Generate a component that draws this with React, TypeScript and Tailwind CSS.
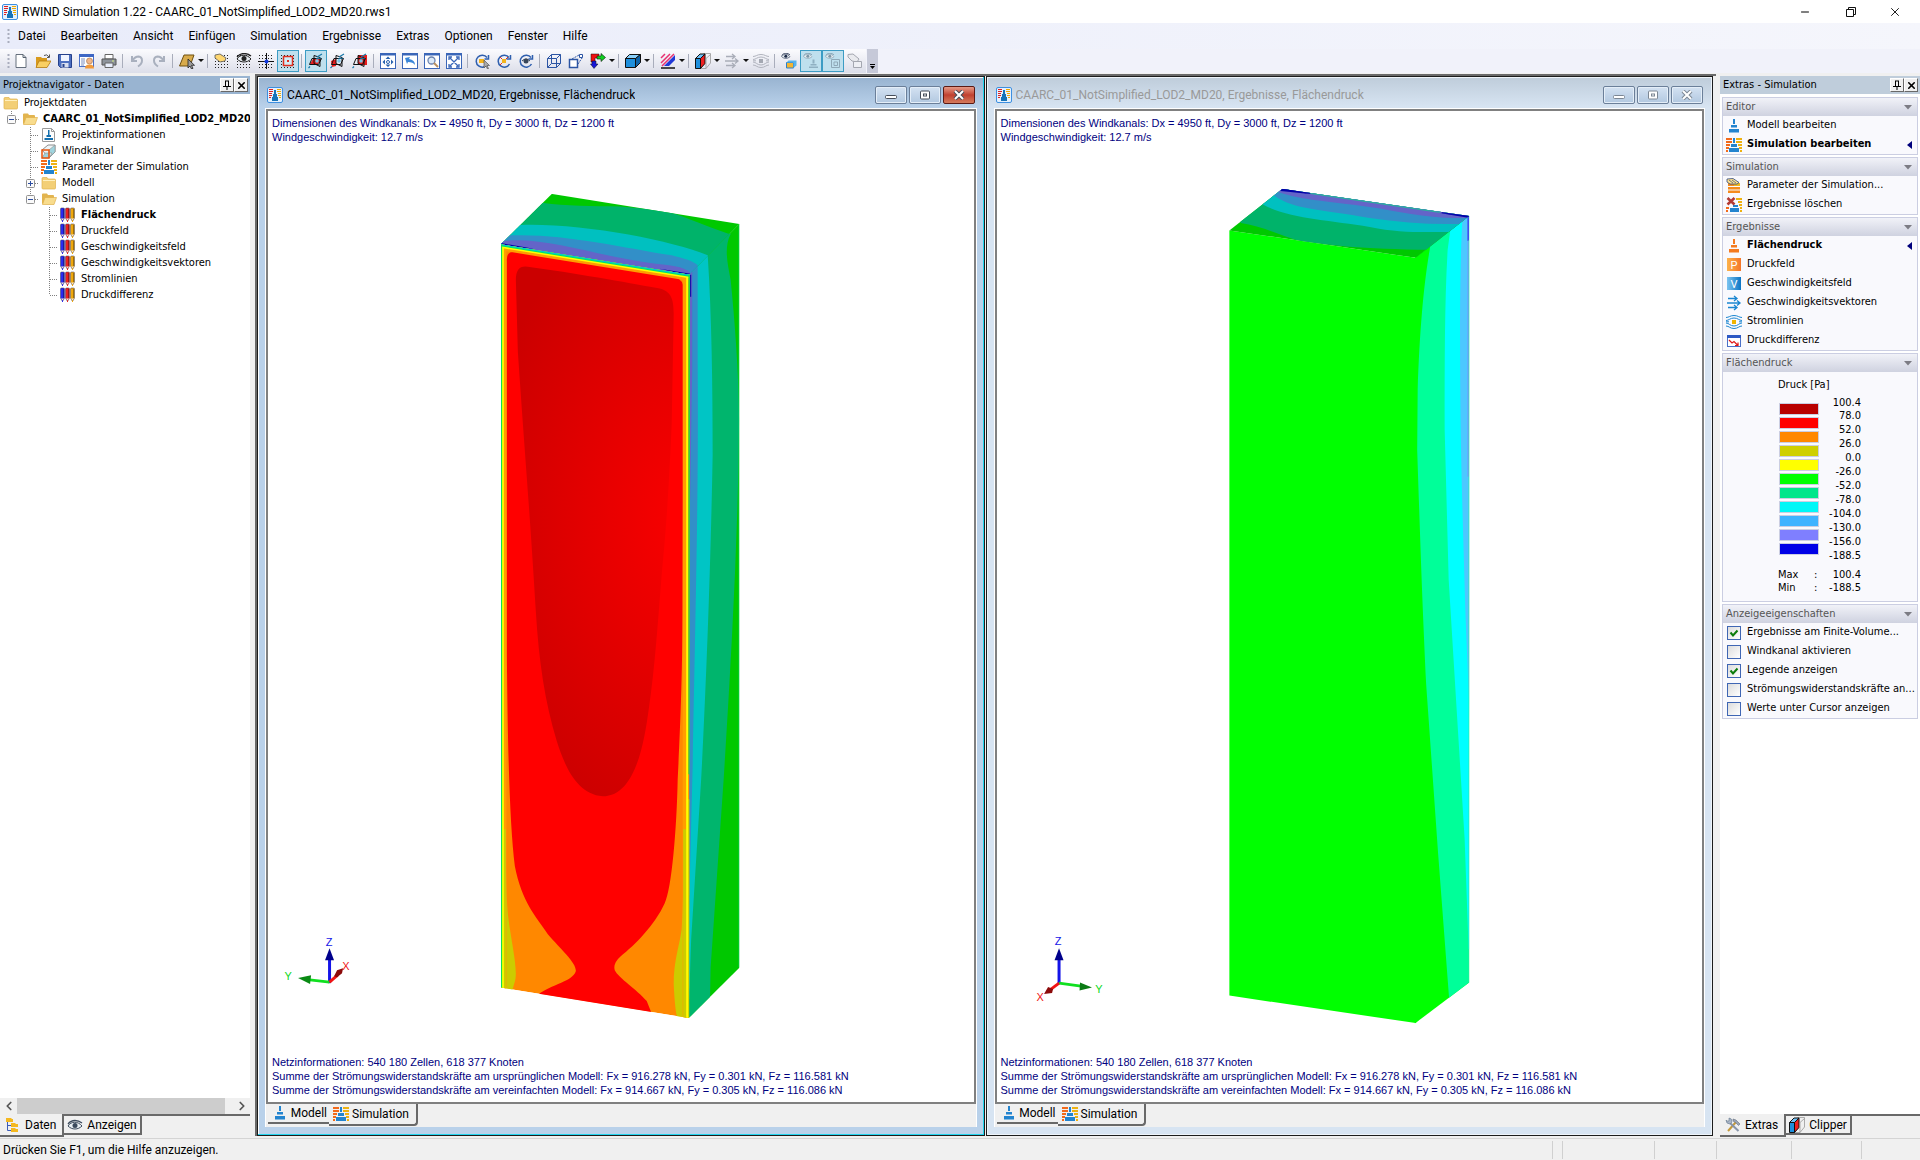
import { Fragment, ReactNode } from 'react';
import clsx from 'clsx';
import { ChevronLeft, ChevronRight, Minus, X } from 'lucide-react';

const Svg = ({ children, w = 16, h = 16 }: { children: ReactNode; w?: number; h?: number }) => (
  <svg width={w} height={h} viewBox={`0 0 ${w} ${h}`} className="shrink-0" fill="none">
    {children}
  </svg>
);

const AppIcon = () => (
  <Svg>
    <rect x="0.5" y="0.5" width="15" height="15" rx="1.5" fill="#e4f1fd" stroke="#3d8fe0" />
    <path d="M2 2.500h4M2 4.500h4M2 6.500h3M2 8.500h3M2 10.500h2" stroke="#e02020" />
    <path d="M10 2.500h4M10 4.500h4M11 6.500h3M11 8.500h3M12 10.500h2" stroke="#f0a800" />
    <path d="M7 3h2v4h1v3h1v4H5v-4h1V7h1z" fill="#1673b8" />
  </Svg>
);

const TowerIcon = ({ color = '#2384cf' }: { color?: string }) => (
  <Svg>
    <path d="M7 1h2v5H7zM5 7h6v2.500H5zM3 11h10v3.500H3z" fill={color} />
  </Svg>
);

const SimIcon = () => (
  <Svg>
    <path d="M0 1h6v2H0zM0 4h6v2H0zM0 7h4v2H0zM0 10h3v2H0zM0 13h2v2H0z" fill="#f26a1b" />
    <path d="M10 1h6v2h-6zM10 4h6v2h-6zM12 7h4v2h-4zM13 10h3v2h-3zM14 13h2v2h-2z" fill="#eeb111" />
    <path d="M7 1h2v5H7zM5 7h6v3H5zM3 11h10v4H3z" fill="#2384cf" />
  </Svg>
);

const FolderIcon = () => (
  <Svg>
    <path d="M1 3.500q0-1 1-1h4l1 1.500h6.500q1 0 1 1V13q0 1-1 1H2q-1 0-1-1z" fill="#f3cf76" stroke="#dfb24e" strokeWidth="0.700" />
    <path d="M2 5.500h12" stroke="#fff0bd" />
  </Svg>
);

const FolderOpenIcon = () => (
  <Svg>
    <path d="M1 3.500q0-1 1-1h4l1 1.500h5q1 0 1 1V13H2q-1 0-1-1z" fill="#e2b44f" />
    <path d="M4 6.500h11.500L13 13.500H1.500z" fill="#f8dc8d" stroke="#e0b04a" strokeWidth="0.700" />
  </Svg>
);

const ReportIcon = () => (
  <Svg>
    <path d="M1.500 1.500h9l3 3v10h-12z" fill="#fdfdfd" stroke="#9a9a9a" />
    <path d="M10.500 1.500v3h3" stroke="#9a9a9a" />
    <path d="M7 3h1.500v5H7zM5.500 8h4.500v2H5.500zM3.500 11h8.500v2H3.500z" fill="#136fae" />
  </Svg>
);

const TunnelIcon = () => (
  <Svg>
    <path d="M1 7l6-5h7v7l-6 6z" fill="#eef4f6" stroke="#8d8d8d" />
    <path d="M8 7l6-5v7l-6 6zM1 15h7l3-5H4z" fill="#9fd4de" stroke="#8d8d8d" strokeWidth="0.600" />
    <rect x="1" y="7" width="7" height="8" stroke="#e8560f" strokeWidth="1.500" />
  </Svg>
);

const PensIcon = () => (
  <Svg>
    {[['0', '#2a2af0'], ['5', '#ee2020'], ['10', '#f0a80c']].map(([x, c]) => (
      <g key={x} transform={`translate(${x} 0)`}>
        <path d="M0.500 2q0-1 1-1h2q1 0 1 1v9l-2 3.500L0.500 11z" fill={c} stroke="#3a3a55" strokeWidth="0.500" />
        <path d="M3.500 2v9" stroke="#00000055" />
        <path d="M1 11.500h3L2.500 13.500z" fill="#f4e4d0" />
        <path d="M2 13.500h1V15H2z" fill={c} />
      </g>
    ))}
  </Svg>
);

const ParamIcon = () => (
  <Svg>
    <path d="M2 5h12v3H2zM2 9h12v2.500H2zM2 12.500h12V15H2z" fill="#f58b1c" />
    <path d="M8 5h6v3H8z" fill="#efb61b" />
    <path d="M1 1l6-.5 6 4-2 1.500L4 6 1 4z" fill="#ffe08a" stroke="#304a80" strokeWidth="0.800" />
    <path d="M3 2l4 3M6 2l4 3" stroke="#304a80" strokeWidth="0.700" />
  </Svg>
);

const DeleteResultsIcon = () => (
  <Svg>
    <path d="M10 1h6v2h-6zM12 4h4v2h-4zM13 7h3v2h-3zM14 10h2v2h-2zM14 13h2v2h-2z" fill="#eeb111" />
    <path d="M0 10h3v2H0zM0 13h2v2H0z" fill="#f26a1b" />
    <path d="M7 8h5v2H7zM4 11h9v4H4z" fill="#2384cf" />
    <path d="M1.500 1l7 6.500M8.500 1l-7 6.500" stroke="#b43a34" strokeWidth="2.600" />
  </Svg>
);

const LetterIcon = ({ letter, from, to }: { letter: string; from: string; to: string }) => (
  <Svg>
    <defs>
      <linearGradient id={`letter-${letter}`}>
        <stop stopColor={from} />
        <stop offset="1" stopColor={to} />
      </linearGradient>
    </defs>
    <rect x="1" y="1" width="14" height="13" fill={`url(#letter-${letter})`} />
    <text x="8" y="12" textAnchor="middle" fontSize="11" fill="#fff" fontFamily="Roboto, sans-serif">{letter}</text>
  </Svg>
);

const VectorsIcon = ({ color = '#1b86d1' }: { color?: string }) => (
  <Svg>
    <path d="M2 3.500h8M1 8h12M2 12.500h8M8 1l3 2.500L8 6M11 5.500L14 8l-3 2.500M8 10l3 2.500L8 15" stroke={color} strokeWidth="1.300" />
  </Svg>
);

const StreamIcon = ({ color = '#1b86d1', core = '#f0b400' }: { color?: string; core?: string }) => (
  <Svg>
    <path d="M0 3.500c3 0 4-2 8-2s5 2 8 2M0 6.500c3 0 4-2.500 8-2.500s5 2.500 8 2.500M0 9c3 0 4 3 8 3s5-3 8-3M0 12c3 0 4 2.500 8 2.500s5-2.500 8-2.500M0 7.800h3M13 7.800h3" stroke={color} />
    <rect x="6" y="6" width="4" height="4" fill={core} />
  </Svg>
);

const DiffIcon = () => (
  <Svg>
    <rect x="1.500" y="2.500" width="13" height="11" fill="#fff" stroke="#4a70c8" />
    <path d="M1 2h14v3H1z" fill="#2d59c4" />
    <path d="M3 7l3 3 2-1.500 4 4M12 9.500v3H9" stroke="#e01818" strokeWidth="1.200" />
  </Svg>
);

const TreeTabIcon = () => (
  <Svg>
    <path d="M1 1h5l1 1h1v3H1zM6 6h4l1 1h2v3H6zM6 11h4l1 1h2v3H6z" fill="#f4b81f" />
    <path d="M2.500 5v8.500H6M2.500 8.500H6" stroke="#3c5cb8" />
  </Svg>
);

const Eye = ({ x = 0, y = 0, color = '#3b4a5c' }: { x?: number; y?: number; color?: string }) => (
  <g transform={`translate(${x} ${y})`}>
    <path d="M1 6c3-5 10-5 14 0-4 4-10 4-14 0z" fill="#e8eef2" stroke={color} />
    <circle cx="8" cy="5.500" r="2.500" fill={color} />
    <path d="M1 4c4-5 10-4 14-1" stroke={color} strokeWidth="1.300" />
  </g>
);

const EyeIcon = () => (
  <Svg>
    <Eye y={3} />
  </Svg>
);

const ToolsIcon = () => (
  <Svg>
    <path d="M3 14L11 5" stroke="#c49a3c" strokeWidth="2" />
    <path d="M8 2l3 1 4 4-1.500 1.500-3-3L8 4z" fill="#9aa4b4" stroke="#67707f" strokeWidth="0.600" />
    <path d="M13.500 14L5 6" stroke="#8794a8" strokeWidth="2" />
    <path d="M1 3q0 4 4 4l2-2q0-4-3-4v3H2z" fill="#a9b5c7" stroke="#67788f" strokeWidth="0.600" />
  </Svg>
);

const ClipperIcon = () => (
  <Svg>
    <path d="M5 4l4-3.500h6.500V10L11 15.500H6" stroke="#999" strokeWidth="0.800" />
    <path d="M0.500 5.500h5v10h-5z" fill="#1f8fdc" stroke="#111" />
    <path d="M0.500 5.500L5 1h5L5.500 5.500z" fill="#6fc0f5" stroke="#111" />
    <path d="M5.500 5.500L10 1v9.500l-4.500 5z" fill="#f02020" stroke="#111" />
    <path d="M11 5.500l4.500-4M11 5.500v10" stroke="#999" strokeWidth="0.800" />
  </Svg>
);

/* toolbar drawings */
const NewIcon = () => (
  <Svg>
    <path d="M3 1.500h7l3 3v10H3z" fill="#fff" stroke="#55606e" strokeWidth="0.900" />
    <path d="M10 1.500v3h3" stroke="#55606e" />
  </Svg>
);
const OpenIcon = () => (
  <Svg>
    <path d="M1 4h5l1 1h5v3l-9 6H1z" fill="#d89a1c" />
    <path d="M4 8h12l-4 6.500H1z" fill="#f9cf62" stroke="#b47a10" strokeWidth="0.800" />
    <path d="M9 2.500q3-2 5 1.500M14.500 1.500V4.500H12" stroke="#555" />
  </Svg>
);
const SaveIcon = () => (
  <Svg>
    <path d="M1.500 1.500h13v13h-11l-2-2z" fill="#4c6fc0" stroke="#25408c" />
    <path d="M4 2h8v6H4z" fill="#f0f4ff" />
    <path d="M4.500 10h7v4.500h-7z" fill="#d8dff0" />
    <path d="M5.500 11h2v3h-2z" fill="#25408c" />
  </Svg>
);
const ContactIcon = () => (
  <Svg>
    <rect x="0.500" y="1.500" width="14" height="12" fill="#fff" stroke="#4a70c8" />
    <path d="M0 1h15v3H0z" fill="#3d66c4" />
    <path d="M2 6h4M2 8h4M2 10h4M2 12h3" stroke="#7a8fc0" />
    <circle cx="10.500" cy="8" r="3" fill="#f0b68a" stroke="#a06b3c" strokeWidth="0.600" />
    <path d="M6 15.500q0-4 4.500-4t4.500 4z" fill="#f29a3a" />
  </Svg>
);
const PrintIcon = () => (
  <Svg>
    <path d="M4 1.500h8V6H4z" fill="#fff" stroke="#666" />
    <path d="M1 6h14v6H1z" fill="#8e949c" stroke="#555" />
    <path d="M4 10h8v4.500H4z" fill="#e8eefc" stroke="#666" />
    <path d="M11 8h2" stroke="#d8f080" />
  </Svg>
);
const UndoIcon = ({ flip = false }: { flip?: boolean }) => (
  <Svg>
    <path
      transform={flip ? 'matrix(-1 0 0 1 16 0)' : undefined}
      d="M3 3v5h5M3.500 7.500Q6 3.500 9.500 3.500 13 4 13 7.500 13 11 9 13.500"
      stroke="#a9b0be"
      strokeWidth="2"
    />
  </Svg>
);
const SelectIcon = () => (
  <Svg>
    <path d="M5 2h10L11 13H0.500z" fill="#d8ab4c" stroke="#6e5010" />
    <path d="M9 6v9l2-2 1.500 3 1.500-.7-1.500-3h3z" fill="#9a9a9a" stroke="#222" strokeWidth="0.800" />
  </Svg>
);
const dots = 'M1 2.500h14M1 5.500h14M1 8.500h14M1 11.500h14M1 14.500h14';
const DotsIcon = ({ children }: { children: ReactNode }) => (
  <Svg>
    <path d={dots} stroke="#222" strokeDasharray="1 2" />
    {children}
  </Svg>
);
const PlaneIcon = ({ fill, d }: { fill: string; d: string }) => (
  <Svg>
    <path d={d} fill={fill} />
    <path d="M4 5.500h9.500l-3 6H1.500zM6 2.500l6 2v9l-6-3z" stroke="#111" />
    <path d="M9 4l5-3M2 13.500l-1.500 1.500M8 6l5-1" stroke="#1878a8" strokeWidth="1.200" />
    <circle cx="9" cy="8" r="1.800" fill="#7cc4e4" />
  </Svg>
);
const BoxedIcon = ({ children }: { children: ReactNode }) => (
  <Svg>
    <rect x="0.500" y="0.500" width="15" height="15" fill="#fff" stroke="#3a66b8" />
    <path d="M1 1.500h14" stroke="#3a66b8" strokeWidth="2" />
    {children}
  </Svg>
);
const RotateIcon = ({ children }: { children: ReactNode }) => (
  <Svg>
    <path d="M13 4.500A6 6 0 1 0 13.500 11M14.500 2v4h-4" stroke="#2f5fae" strokeWidth="1.500" />
    {children}
  </Svg>
);
const WireIcon = () => (
  <Svg>
    <path d="M1.500 5.500h9v9h-9zM5.500 1.500h9v9h-9zM1.500 5.500l4-4M10.500 5.500l4-4M1.500 14.500l4-4M10.500 14.500l4-4" stroke="#2c55a4" />
  </Svg>
);
const ZoomBoxIcon = () => (
  <Svg>
    <path d="M1.500 6.500h8v8h-8z" fill="#fff" stroke="#2c55a4" strokeWidth="1.500" />
    <path d="M11.500 1.500h3v3h-3z" fill="#fff" stroke="#2c55a4" />
    <path d="M4 6l7-4M10 11l4-6" stroke="#2c55a4" strokeDasharray="2 1" />
  </Svg>
);
const AxesIcon = () => (
  <Svg>
    <path d="M1 1h8v4H5v4H1z" fill="#f01010" stroke="#111" strokeWidth="0.500" />
    <path d="M7 3h4V0.500l4.500 4-4.500 4V6H7z" fill="#10d020" stroke="#111" strokeWidth="0.600" />
    <path d="M2 8h4v3h2l-4 4.500L0.500 11H2z" fill="#1818d8" stroke="#111" strokeWidth="0.500" />
  </Svg>
);
const CubeIcon = () => (
  <Svg>
    <path d="M0.500 5.500h10v9h-10z" fill="#1f8fdc" stroke="#111" />
    <path d="M0.500 5.500l4-4h11l-5 4z" fill="#8ad0fa" stroke="#111" />
    <path d="M10.500 5.500l5-4v8l-5 5z" fill="#0c62a8" stroke="#111" />
  </Svg>
);
const HatchIcon = () => (
  <Svg>
    <path d="M1 5l4-4M1 10l9-9M2 13L14 1" stroke="#e83070" strokeWidth="1.500" />
    <path d="M4 13L15 2v5l-6 6z" fill="#2038d8" />
    <path d="M1 15h14" stroke="#111" strokeWidth="1.500" />
  </Svg>
);
const EyeBoxIcon = ({ color, children }: { color: string; children: ReactNode }) => (
  <Svg>
    <g transform="scale(0.6)">
      <Eye color={color} />
    </g>
    {children}
  </Svg>
);

type Tool = { name: string; icon: ReactNode; active?: boolean; arrow?: boolean };

const toolGroups: Tool[][] = [
  [
    { name: 'Neu', icon: <NewIcon /> },
    { name: 'Öffnen', icon: <OpenIcon /> },
    { name: 'Speichern', icon: <SaveIcon /> },
    { name: 'Projektmanager', icon: <ContactIcon /> },
    { name: 'Drucken', icon: <PrintIcon /> },
  ],
  [
    { name: 'Rückgängig', icon: <UndoIcon /> },
    { name: 'Wiederherstellen', icon: <UndoIcon flip /> },
  ],
  [{ name: 'Auswahl', icon: <SelectIcon />, arrow: true }],
  [
    { name: 'Raster bearbeiten', icon: <DotsIcon><path d="M1 2l5-1 6 4-1 3-5 1-5-4z" fill="#ffd770" stroke="#555" strokeWidth="0.800" /></DotsIcon> },
    { name: 'Raster anzeigen', icon: <DotsIcon><Eye color="#222" /></DotsIcon> },
    { name: 'Fadenkreuz', icon: <DotsIcon><path d="M8.500 0v16M0 8.500h16" stroke="#111" /><circle cx="8.500" cy="8.500" r="2" fill="#1038e0" /></DotsIcon> },
    { name: 'Fang', icon: <DotsIcon><rect x="3.500" y="3.500" width="9" height="9" fill="#d4ecf6" stroke="#e03020" strokeWidth="1.500" /><path d="M7 7h2v2H7z" fill="#e03020" /></DotsIcon>, active: true },
  ],
  [
    { name: 'Ebene XY', icon: <PlaneIcon fill="#e81c1c" d="M2 11h8l3-5H5z" />, active: true },
    { name: 'Ebene YZ', icon: <PlaneIcon fill="#e81c1c" d="M1 8l5-2v7l-4 1z" /> },
    { name: 'Ebene XZ', icon: <PlaneIcon fill="#e81c1c" d="M6 2h9v10H6z" /> },
  ],
  [
    { name: 'Alles zeigen', icon: <BoxedIcon><path d="M8 3.500l2.500 2.500h-5zM8 14l2.500-2.500h-5zM2.500 9L5 6.500v5zM13.500 9L11 6.500v5z" fill="#2862ae" /><circle cx="8" cy="9" r="1.500" stroke="#2862ae" /></BoxedIcon> },
    { name: 'Vorige Ansicht', icon: <BoxedIcon><path d="M3 5l5-1-1 2q6 1 6 6-2-3-7-3l-1 2z" fill="#3a86d8" /></BoxedIcon> },
    { name: 'Zoomfenster', icon: <BoxedIcon><circle cx="7.500" cy="7.500" r="3.500" stroke="#6c84b0" strokeWidth="1.300" fill="#dceaf8" /><path d="M10 10l4 4" stroke="#b89060" strokeWidth="2" /></BoxedIcon> },
    { name: 'Vollbild', icon: <BoxedIcon><path d="M4 5l8 8M12 5l-8 8M3 7V4h3M10 4h3v3M13 11v3h-3M6 14H3v-3" stroke="#3a66b8" strokeWidth="1.300" /></BoxedIcon> },
  ],
  [
    { name: 'Drehen', icon: <RotateIcon><path d="M5 6h5v4H5z" fill="#f4b41c" /><path d="M10 7v8l2-2 1.500 3 1-.5-1.500-3h2.500z" fill="#aaa" stroke="#444" strokeWidth="0.600" /></RotateIcon> },
    { name: 'Drehen um Punkt', icon: <RotateIcon><path d="M6 6h4v4H6z" fill="#f4b41c" /><path d="M4 4l2 2M12 4l-2 2M4 12l2-2" stroke="#e03020" /></RotateIcon> },
    { name: 'Drehen um Betrachter', icon: <RotateIcon><circle cx="8" cy="8" r="2.500" fill="#38465a" /><path d="M4 8q4-4 8 0" stroke="#38465a" /></RotateIcon> },
  ],
  [
    { name: 'Drahtmodell', icon: <WireIcon /> },
    { name: 'Vergrößern', icon: <ZoomBoxIcon /> },
    { name: 'Blickrichtung', icon: <AxesIcon />, arrow: true },
  ],
  [{ name: 'Darstellung', icon: <CubeIcon />, arrow: true }],
  [{ name: 'Füllung', icon: <HatchIcon />, arrow: true }],
  [
    { name: 'Clipper', icon: <ClipperIcon />, arrow: true },
    { name: 'Vektoren', icon: <VectorsIcon color="#a9adb8" />, arrow: true },
    { name: 'Stromlinien', icon: <StreamIcon color="#b0b3bd" core="#a4a8b2" /> },
  ],
  [
    { name: 'Objekte', icon: <EyeBoxIcon color="#1c2a48"><path d="M5.500 9.500h7v5.500h-7z" fill="#f2b431" stroke="#2a80c8" /><path d="M5.500 9.500l2-2h8l-3 2zM12.500 9.500l3-2v5l-3 2.500z" fill="#58b4ec" /></EyeBoxIcon> },
    { name: 'Modell anzeigen', icon: <EyeBoxIcon color="#7c96a6"><path d="M9.500 6.500h2v4h-2zM7.500 11h6v1.500h-6zM6 13.500h9V15H6z" fill="#8fb0c2" /></EyeBoxIcon>, active: true },
    { name: 'Kanal anzeigen', icon: <EyeBoxIcon color="#7c96a6"><path d="M6.500 6.500h8v8h-8zM9 9h3.500v3.500H9z" stroke="#8fa9b8" /></EyeBoxIcon>, active: true },
    { name: 'Bearbeiten', icon: <Svg><path d="M1 1.500l5-.5 6 5-2 3-5-1-4-4z" fill="#e9eaee" stroke="#a4a7b0" /><path d="M6.500 8.500h8v6h-8z" fill="#eeeff4" stroke="#a4a7b0" /></Svg> },
  ],
];

const menus = ['Datei', 'Bearbeiten', 'Ansicht', 'Einfügen', 'Simulation', 'Ergebnisse', 'Extras', 'Optionen', 'Fenster', 'Hilfe'];

const Grip = ({ h }: { h: number }) => (
  <Svg w={3} h={h}>
    <path d={`M1.500 0v${h}`} stroke="#a9adbd" strokeWidth="2" strokeDasharray="2 2" />
  </Svg>
);

const TitleBar = () => (
  <header className="flex h-[23px] shrink-0 items-center bg-white pl-0.5">
    <AppIcon />
    <h1 className="ml-1 text-[12px] text-black">RWIND Simulation 1.22 - CAARC_01_NotSimplified_LOD2_MD20.rws1</h1>
    <div className="ml-auto flex">
      <button aria-label="Minimieren" className="flex h-5 w-[46px] items-center justify-center"><Minus size={12} strokeWidth={2} /></button>
      <button aria-label="Wiederherstellen" className="flex h-5 w-[46px] items-center justify-center">
        <Svg w={10} h={10}>
          <path d="M0.500 2.500h7v7h-7zM2.500 2V0.500h7v7H8" stroke="#111" />
        </Svg>
      </button>
      <button aria-label="Schließen" className="flex h-5 w-[46px] items-center justify-center pr-1"><X size={14} strokeWidth={1.500} /></button>
    </div>
  </header>
);

const MenuBar = () => (
  <nav className="flex h-[26px] shrink-0 items-center bg-linear-to-r from-[#e9ecfa] to-[#f5f6fc] pl-[7px]">
    <Grip h={14} />
    {menus.map((m) => (
      <button key={m} className="pr-[7px] pl-2 text-[12px] leading-5 text-black">{m}</button>
    ))}
  </nav>
);

const Toolbar = () => (
  <div className="flex h-6 shrink-0 bg-[#f1f2fa]">
    <div className="flex items-center bg-linear-to-b from-[#fbfbfe] to-[#dcdee9] pl-[7px]">
      <Grip h={14} />
      {toolGroups.map((group, i) => (
        <Fragment key={i}>
          {i > 0 && <span className="mx-[2px] h-3.5 w-0.5 border-l border-[#a9adbb]" />}
          {group.map((t) => (
            <button
              key={t.name}
              aria-label={t.name}
              className={clsx(
                'flex h-[22px] min-w-[22px] items-center justify-center gap-[3px]',
                t.active && 'border border-[#3c9cc4] bg-[#bfe0ee]',
                t.arrow && 'px-[3px] pr-0'
              )}
            >
              {t.icon}
              {t.arrow && (
                <svg width="7" height="4" viewBox="0 0 7 4">
                  <path d="M0 0h6L3 3z" fill="#111" />
                </svg>
              )}
            </button>
          ))}
        </Fragment>
      ))}
    </div>
    <button aria-label="Weitere Schaltflächen" className="ml-px flex w-[11px] flex-col items-center justify-end gap-px bg-[#c6c9d8] pb-1">
      <span className="h-px w-[5px] bg-black" />
      <svg width="5" height="3" viewBox="0 0 5 3">
        <path d="M0 0h5L2.500 3z" />
      </svg>
    </button>
  </div>
);

const PanelHeader = ({ title, color }: { title: string; color: string }) => (
  <div className={clsx('flex h-[18px] shrink-0 items-center pr-[2px] pl-[3px]', color)}>
    <h2 className="text-[11px] text-black">{title}</h2>
    <button aria-label="Fixieren" className="ml-auto flex h-3.5 w-3.5 items-center justify-center border border-t-white border-r-[#696969] border-b-[#696969] border-l-white bg-[#f0f0f0]">
      <Svg w={8} h={10}>
        <path d="M2 1h4M2.500 1v5M5.500 1v5M0 6.500h8M4 6v4" stroke="#000" />
      </Svg>
    </button>
    <button aria-label="Schließen" className="flex h-3.5 w-3.5 items-center justify-center border border-t-white border-r-[#696969] border-b-[#696969] border-l-white bg-[#f0f0f0]">
      <X size={11} strokeWidth={3.500} className="shrink-0" />
    </button>
  </div>
);

type Line = 'none' | 'bar' | 'tee' | 'end';

const Gutter = ({ line, box }: { line: Line; box?: '+' | '-' }) => (
  <svg width="19" height="16" viewBox="0 0 19 16" className="shrink-0" fill="none">
    {line !== 'none' && (
      <path d={line === 'end' ? 'M11.500 0v8' : 'M11.500 0v16'} stroke="#808080" strokeDasharray="1 1" />
    )}
    {(line === 'tee' || line === 'end') && <path d="M12 8.500h9" stroke="#808080" strokeDasharray="1 1" />}
    {box && (
      <>
        <rect x="7.500" y="4.500" width="8" height="8" rx="1" fill="#fafafa" stroke="#919191" />
        <path d="M9 8.500h5" stroke="#2b4ca0" />
        {box === '+' && <path d="M11.500 6v5" stroke="#2b4ca0" />}
      </>
    )}
  </svg>
);

const treeRows: { label: string; icon: ReactNode; lines: Line[]; box?: '+' | '-'; bold?: boolean }[] = [
  { label: 'Projektdaten', icon: <FolderIcon />, lines: [] },
  { label: 'CAARC_01_NotSimplified_LOD2_MD20', icon: <FolderOpenIcon />, lines: ['end'], box: '-', bold: true },
  { label: 'Projektinformationen', icon: <ReportIcon />, lines: ['none', 'tee'] },
  { label: 'Windkanal', icon: <TunnelIcon />, lines: ['none', 'tee'] },
  { label: 'Parameter der Simulation', icon: <SimIcon />, lines: ['none', 'tee'] },
  { label: 'Modell', icon: <FolderIcon />, lines: ['none', 'tee'], box: '+' },
  { label: 'Simulation', icon: <FolderOpenIcon />, lines: ['none', 'end'], box: '-' },
  { label: 'Flächendruck', icon: <PensIcon />, lines: ['none', 'none', 'tee'], bold: true },
  { label: 'Druckfeld', icon: <PensIcon />, lines: ['none', 'none', 'tee'] },
  { label: 'Geschwindigkeitsfeld', icon: <PensIcon />, lines: ['none', 'none', 'tee'] },
  { label: 'Geschwindigkeitsvektoren', icon: <PensIcon />, lines: ['none', 'none', 'tee'] },
  { label: 'Stromlinien', icon: <PensIcon />, lines: ['none', 'none', 'tee'] },
  { label: 'Druckdifferenz', icon: <PensIcon />, lines: ['none', 'none', 'end'] },
];

const DockTabs = ({ tabs }: { tabs: { label: string; icon: ReactNode }[] }) => (
  <div className="flex h-6 shrink-0 items-start bg-[#f0f0f0] font-[Roboto,'Open_Sans',sans-serif]">
    {tabs.map((t, i) => (
      <button
        key={t.label}
        className={clsx(
          'flex items-center gap-1 border-r-2 border-b-2 border-[#696969] bg-[#f0f0f0] text-[12px] text-black',
          i === 0 ? 'h-[23px] pr-1.5 pl-[5px]' : 'h-[21px] border-t-2 pr-[3px] pl-[3px]'
        )}
      >
        {t.icon}
        {t.label}
      </button>
    ))}
    <span className="h-0.5 flex-1 bg-[#696969]" />
  </div>
);

const Navigator = () => (
  <aside className="flex w-[250px] shrink-0 flex-col pt-[3px]">
    <PanelHeader title="Projektnavigator - Daten" color="bg-[#99b4d1]" />
    <ul className="flex-1 overflow-hidden bg-white pt-px">
      {treeRows.map((r) => (
        <li key={r.label}>
          <button className="flex h-4 items-center text-[11px] leading-4 whitespace-nowrap text-black">
            {r.lines.map((l, i) => (
              <Gutter key={i} line={l} box={i === r.lines.length - 1 ? r.box : undefined} />
            ))}
            <span className="mr-[5px] ml-[3px]">{r.icon}</span>
            <span className={r.bold ? 'font-bold' : ''}>{r.label}</span>
          </button>
        </li>
      ))}
    </ul>
    <div className="flex h-4 shrink-0 items-center bg-[#f0f0f0]">
      <button aria-label="Nach links" className="flex w-[17px] justify-center"><ChevronLeft size={14} strokeWidth={3} color="#555" /></button>
      <span className="h-4 flex-1 bg-[#cdcdcd]" />
      <button aria-label="Nach rechts" className="ml-2 flex w-[17px] justify-center"><ChevronRight size={14} strokeWidth={3} color="#555" /></button>
    </div>
    <DockTabs tabs={[{ label: 'Daten', icon: <TreeTabIcon /> }, { label: 'Anzeigen', icon: <EyeIcon /> }]} />
  </aside>
);

const AxisLabel = ({ x, y, fill, children }: { x: number; y: number; fill: string; children: string }) => (
  <text x={x} y={y} fill={fill} textAnchor="middle" fontSize="11" fontFamily="Liberation Sans, Arial, sans-serif">{children}</text>
);

const FrontModel = () => (
  <svg className="absolute inset-0 h-full w-full" viewBox="268 111 706 992" fill="none">
    <defs>
      <clipPath id="f-top"><path d="M501 244.500L552 194l187.700 30L690 275z" /></clipPath>
      <clipPath id="f-side"><path d="M690 274.500L739.700 224v744.500L689 1019z" /></clipPath>
      <clipPath id="f-front"><path d="M501 244.500l189.500 30.500L689.500 1019 501 988.500z" /></clipPath>
      <radialGradient id="f-core" gradientUnits="userSpaceOnUse" cx="0" cy="0" r="1" gradientTransform="translate(690 520) scale(210 330)">
        <stop stopColor="#fa0000" />
        <stop offset="0.400" stopColor="#e80000" />
        <stop offset="1" stopColor="#cb0000" />
      </radialGradient>
    </defs>
    <g clipPath="url(#f-top)">
      <path d="M490 180h260v110H490z" fill="#00c800" />
      <path d="M490 203h54c20 3 50 3 76 3.500l45 4c25 8 45 17 63 23l10 2v60H490z" fill="#00b36a" />
      <path d="M490 225h31c60-2 150 15 187 30.500l20 35H490z" fill="#00c0c0" />
      <path d="M490 235.500h22c50-2 110 12 160 20 12 3 22 6 26 10v25H490z" fill="#328fc8" />
      <path d="M490 241h16c40-4 90 15 150 23 20 2 32 4 36 11H490z" fill="#6464c8" />
      <path d="M500 243l34 6-33-3zM660 269l31 5v2z" fill="#0000aa" />
    </g>
    <g clipPath="url(#f-side)">
      <path d="M680 210h70v820h-70z" fill="#00c800" />
      <path d="M680 220l51 14c-7 14-3 30 0 46 4 40 8 90 8.500 140-1 120-8 240-15.500 360l-13 188-1 50h-30z" fill="#00b56d" />
      <path d="M680 255h28c4 60 5 130 5 200-2 110-6 220-11.500 325l-7.500 120-2.500 40-2 60h-12z" fill="#00c5c5" />
      <path d="M680 262l18 4v100c1 120-2 240-5 400l-4 160h-9z" fill="#328fc8" />
      <path d="M680 270h12.500v100l-2 130H680z" fill="#6464c8" />
      <path d="M691 275v22" stroke="#0000aa" />
      <path d="M739.500 224v744" stroke="#00d860" />
    </g>
    <g clipPath="url(#f-front)">
      <path d="M501 244.500l189.500 30.500L689.500 1019 501 988.500z" fill="#ff8800" />
      <path d="M501 820h5c0 40 0 70 2 95 3 25 8 45 8 60 0 6-2 10-3.500 16l-12 2zM690 800h-6c0 60 0 100-2 130-3 20-8 32-8 55 1 20 2 28 4 36h13z" fill="#cccc00" />
      <path d="M507 262q-1-11 8-10l161 26q8 2 8 12l-1 300c0 90-3 150-5 190-1 50-6 110-13 124-10 22-30 42-44 53q-8 7-6 14c4 8 22 19 32 31l6 15H515l22-20c8-10 36-14 39-25 1-8-15-22-28-37-12-18-26-32-33-68-5-40-7-110-8-210z" fill="#f00" />
      <path d="M516 280q0-15 12-13c45 6 100 16 128 21 15 2 18 10 18 26l-2 110c-3 70-6 110-10 151-4 50-7 95-13 135-5 36-14 87-46 87-26-2-38-30-46-55-12-40-18-80-21-130-6-100-12-170-18-260z" fill="url(#f-core)" />
      <path d="M501 244.500l189 30.500" stroke="#ff9d00" strokeWidth="12" />
      <path d="M504.500 250v745M685 280v745" stroke="#ff9d00" strokeWidth="4" />
      <path d="M504.500 830v165M685 830v190" stroke="#cccc00" strokeWidth="3" />
      <path d="M501 244.500l189 30.500" stroke="#ffff00" strokeWidth="7" />
      <path d="M503 248v745M687.500 276v745" stroke="#ffff00" strokeWidth="2" />
      <path d="M501 244.500l189 30.500" stroke="#00e860" strokeWidth="4" />
      <path d="M501 244.500l189 30.500" stroke="#00c8d8" strokeWidth="2" />
      <path d="M501.500 245v745M689.500 275v500" stroke="#10e050" strokeWidth="1.500" />
    </g>
    <path d="M329.500 984v-26" stroke="#1414e8" strokeWidth="3" />
    <path d="M329.500 949l4.500 12h-9z" fill="#00008c" />
    <path d="M329.500 983l-22-2.500" stroke="#10e020" strokeWidth="3" />
    <path d="M298 979l13-3-1 9z" fill="#0a8a14" />
    <path d="M329.500 983l8-7" stroke="#f01414" strokeWidth="3" />
    <path d="M334 977l3-6 6-2-1 5-5 4z" fill="#8c0a0a" />
    <AxisLabel x={329} y={947} fill="#1414e8">Z</AxisLabel>
    <AxisLabel x={288} y={981} fill="#10d820">Y</AxisLabel>
    <AxisLabel x={346} y={971} fill="#f01414">X</AxisLabel>
  </svg>
);

const BackModel = () => (
  <svg className="absolute inset-0 h-full w-full" viewBox="997 111 706 992" fill="none">
    <defs>
      <clipPath id="b-top"><path d="M1229.500 230.500L1282.500 189l187 27L1416 258z" /></clipPath>
      <clipPath id="b-side"><path d="M1415 258l54.500-42V983.500L1415 1024.500z" /></clipPath>
    </defs>
    <path d="M1229.500 230.500L1416 258l3-2v765l-3 3-186.500-27.500z" fill="#0f0" />
    <g clipPath="url(#b-side)">
      <path d="M1410 210h62v820h-62z" fill="#0f0" />
      <path d="M1472 210h-38l-4 40c-6 35-10 80-12 140l-.5 60c3 90 5 150 9 235l12 170 11 145h25z" fill="#00ff99" />
      <path d="M1472 220h-20l-4 30c-3 50-3 110-3 180l4 150 8 130 8 130 4 110h5z" fill="#0ff" />
      <path d="M1472 215h-9c-3 50-3 120-2 215 1 60 3 120 5 190l5 120z" fill="#4cc8ff" />
      <path d="M1468.500 217v260" stroke="#8a80ff" />
      <path d="M1468.500 217v24" stroke="#2020e8" />
      <path d="M1469.500 240v744" stroke="#30e8a0" />
    </g>
    <g clipPath="url(#b-top)">
      <path d="M1220 180h260v90h-260z" fill="#00c800" />
      <path d="M1220 180h260v70h-51c-30 0-60-2-80-3l-46-5c-20-5-40-16-62-19z" fill="#00b36a" />
      <path d="M1220 180h260v52h-31c-30 0-50 1-79-5-40-7-80-8-106-22z" fill="#00c0c0" />
      <path d="M1220 180h260v42l-20 2c-30 1-60-2-90-6-50-9-75-8-95-22z" fill="#328fc8" />
      <path d="M1220 180h260v38h-22c-35 0-60-7-88-11-40-6-65-6-92-15z" fill="#6464c8" />
      <path d="M1280 187l30 7-29-3zM1440 213l30 3v2z" fill="#0000aa" />
    </g>
    <path d="M1310 193.500l130 19" stroke="#18c890" strokeWidth="0.800" />
    <path d="M1282.500 189.500l28 4M1442 212.800l27 3.700" stroke="#0000aa" />
    <path d="M1059 984v-26" stroke="#1414e8" strokeWidth="3" />
    <path d="M1059 949l4.500 12h-9z" fill="#00008c" />
    <path d="M1059 984l22 3" stroke="#10e020" strokeWidth="3" />
    <path d="M1092 988.500l-12-5-.5 8z" fill="#0a7a14" />
    <path d="M1059 984l-8 6" stroke="#f01414" strokeWidth="3" />
    <path d="M1044 995l4-7 5 2-1 4z" fill="#8c0a0a" />
    <AxisLabel x={1058} y={946} fill="#1414e8">Z</AxisLabel>
    <AxisLabel x={1099} y={994} fill="#10d820">Y</AxisLabel>
    <AxisLabel x={1040} y={1002} fill="#f01414">X</AxisLabel>
  </svg>
);

const WindowButton = ({ label, close, children }: { label: string; close?: boolean; children: ReactNode }) => (
  <button
    aria-label={label}
    className={clsx(
      'flex h-[18px] w-8 items-center justify-center rounded-[2px] border',
      close
        ? 'border-[#5c1a14] bg-linear-to-b from-[#e49a88] via-[#c04030] to-[#d47a5c]'
        : 'border-[#6b7f99] bg-linear-to-b from-[#d4e2f2] to-[#b2c8e0] shadow-[inset_0_0_0_1px_#e4eef8]'
    )}
  >
    {children}
  </button>
);

const ModelWindow = ({ active, children }: { active?: boolean; children: ReactNode }) => {
  const glyph = active ? '#454d59' : '#7c8794';
  return (
    <section
      className={clsx(
        'flex min-w-0 flex-1 flex-col border border-[#1c1c1c]',
        active
          ? 'bg-[#b9d1ea] shadow-[inset_-1px_-1px_0_0_#20d4ee,inset_1px_1px_0_0_#fff]'
          : 'bg-[#d7e4f2] shadow-[inset_0_0_0_1px_#eef4fa]'
      )}
    >
      <div
        className={clsx(
          'm-px flex h-[29px] shrink-0 items-center gap-1 px-2 pt-1',
          active ? 'bg-linear-to-b from-[#99b4d1] to-[#b9d1ea]' : 'bg-linear-to-b from-[#bfcddb] to-[#d7e4f2]'
        )}
      >
        <AppIcon />
        <h3 className={clsx('truncate text-[12px]', active ? 'text-black' : 'text-[#999]')}>
          CAARC_01_NotSimplified_LOD2_MD20, Ergebnisse, Flächendruck
        </h3>
        <div className="ml-auto flex gap-[2px]">
          <WindowButton label="Minimieren">
            <Svg w={12} h={10}><rect x="0.500" y="5.500" width="11" height="3" rx="1" fill="#fff" stroke={glyph} /></Svg>
          </WindowButton>
          <WindowButton label="Maximieren">
            <Svg w={12} h={10}><rect x="1.500" y="1" width="9" height="8" rx="1" fill="#fff" stroke={glyph} /><rect x="4.500" y="4" width="3" height="2" stroke={glyph} /></Svg>
          </WindowButton>
          <WindowButton label="Schließen" close={active}>
            <Svg w={12} h={10}><path d="M2 1l8 8M10 1L2 9" stroke={glyph} strokeWidth="4" /><path d="M2 1l8 8M10 1L2 9" stroke="#fff" strokeWidth="2" /></Svg>
          </WindowButton>
        </div>
      </div>
      <div className="mx-[7px] mb-2 flex flex-1 flex-col border border-b-0 border-white">
        <div className="relative flex flex-1 flex-col justify-between border-2 border-[#808080] bg-white px-1 py-[5px] text-[11px] leading-[14px] font-normal text-[#000080] font-['Liberation_Sans',Arial,sans-serif]">
          {children}
          <div className="relative">
            <p>Dimensionen des Windkanals: Dx = 4950 ft, Dy = 3000 ft, Dz = 1200 ft</p>
            <p>Windgeschwindigkeit: 12.7 m/s</p>
          </div>
          <div className="relative">
            <p>Netzinformationen: 540 180 Zellen, 618 377 Knoten</p>
            <p>Summe der Strömungswiderstandskräfte am ursprünglichen Modell: Fx = 916.278 kN, Fy = 0.301 kN, Fz = 116.581 kN</p>
            <p>Summe der Strömungswiderstandskräfte am vereinfachten Modell: Fx = 914.667 kN, Fy = 0.305 kN, Fz = 116.086 kN</p>
          </div>
        </div>
        <div className="flex h-[23px] shrink-0 items-start bg-[#f0f0f0] pl-0.5 text-[12px] text-black">
          <button className="flex h-5 w-[61px] items-center justify-between border-b-2 border-[#696969] pr-0.5 pl-1">
            <TowerIcon />
            Modell
          </button>
          <button className="flex h-[22px] items-center gap-[3px] rounded-br-sm border-r-2 border-b-2 border-[#696969] pr-[7px] pl-1">
            <SimIcon />
            Simulation
          </button>
        </div>
      </div>
    </section>
  );
};

const ToolSection = ({ title, children }: { title: string; children: ReactNode }) => (
  <section className="border border-[#cbcee2] bg-[#f9f9fd]">
    <h3 className="flex h-[18px] items-center justify-between bg-linear-to-b from-[#f1f2f8] to-[#cfd2e0] pr-[5px] pl-[3px] text-[11px] text-[#555]">
      {title}
      <svg width="8" height="5" viewBox="0 0 8 5">
        <path d="M0 0h8L4 4.500z" fill="#7c7c84" />
      </svg>
    </h3>
    {children}
  </section>
);

type Entry = { label: string; icon: ReactNode; active?: boolean };

const EntryList = ({ entries }: { entries: Entry[] }) => (
  <ul>
    {entries.map((e) => (
      <li key={e.label}>
        <button className={clsx('flex h-[19px] w-full items-center gap-1 pr-[5px] pl-[3px] text-[11px] whitespace-nowrap text-black', e.active && 'font-bold')}>
          {e.icon}
          <span className="ml-px">{e.label}</span>
          {e.active && (
            <svg width="5" height="8" viewBox="0 0 5 8" className="ml-auto">
              <path d="M5 0v8L0 4z" fill="#00007c" />
            </svg>
          )}
        </button>
      </li>
    ))}
  </ul>
);

const legendColors = [
  'bg-[#b90000]', 'bg-[#ff0000]', 'bg-[#ff8800]', 'bg-[#cfcf00]', 'bg-[#ffff00]', 'bg-[#00ff00]',
  'bg-[#00e68a]', 'bg-[#00f7f7]', 'bg-[#3fb3ff]', 'bg-[#7f7fff]', 'bg-[#0000e6]',
];
const legendValues = ['100.4', '78.0', '52.0', '26.0', '0.0', '-26.0', '-52.0', '-78.0', '-104.0', '-130.0', '-156.0', '-188.5'];

const Legend = () => (
  <div className="h-[229px] pt-1.5 pl-[55px] text-[11px] text-black">
    <p className="leading-3.5">Druck [Pa]</p>
    <div className="flex pt-1 pl-px">
      <div className="flex flex-col gap-0.5 pt-[7px]">
        {legendColors.map((c) => (
          <span key={c} className={clsx('h-3 w-10 border border-[#cbcee2]', c)} />
        ))}
      </div>
      <div className="w-[42px] text-right leading-[14px]">
        {legendValues.map((v) => (
          <p key={v} className="first:leading-[13px]">{v}</p>
        ))}
      </div>
    </div>
    <dl className="grid w-[83px] grid-cols-[36px_1fr] pt-[5px] leading-[13px]">
      <dt>Max</dt>
      <dd className="flex justify-between"><span>:</span>100.4</dd>
      <dt>Min</dt>
      <dd className="flex justify-between"><span>:</span>-188.5</dd>
    </dl>
  </div>
);

const displayOptions = [
  { label: 'Ergebnisse am Finite-Volume...', checked: true },
  { label: 'Windkanal aktivieren', checked: false },
  { label: 'Legende anzeigen', checked: true },
  { label: 'Strömungswiderstandskräfte an...', checked: false },
  { label: 'Werte unter Cursor anzeigen', checked: false },
];

const ToolsPanel = () => (
  <aside className="ml-1 flex w-[200px] shrink-0 flex-col bg-white">
    <div className="bg-[#f0f0f0] pt-[3px]">
      <PanelHeader title="Extras - Simulation" color="bg-[#bfcddb]" />
    </div>
    <div className="flex flex-1 flex-col gap-0.5 px-0.5 pt-[3px]">
      <ToolSection title="Editor">
        <EntryList
          entries={[
            { label: 'Modell bearbeiten', icon: <TowerIcon /> },
            { label: 'Simulation bearbeiten', icon: <SimIcon />, active: true },
          ]}
        />
      </ToolSection>
      <ToolSection title="Simulation">
        <EntryList
          entries={[
            { label: 'Parameter der Simulation...', icon: <ParamIcon /> },
            { label: 'Ergebnisse löschen', icon: <DeleteResultsIcon /> },
          ]}
        />
      </ToolSection>
      <ToolSection title="Ergebnisse">
        <EntryList
          entries={[
            { label: 'Flächendruck', icon: <TowerIcon color="#f47a20" />, active: true },
            { label: 'Druckfeld', icon: <LetterIcon letter="P" from="#fdb24a" to="#f4762a" /> },
            { label: 'Geschwindigkeitsfeld', icon: <LetterIcon letter="V" from="#7cc4f0" to="#0a74c4" /> },
            { label: 'Geschwindigkeitsvektoren', icon: <VectorsIcon /> },
            { label: 'Stromlinien', icon: <StreamIcon /> },
            { label: 'Druckdifferenz', icon: <DiffIcon /> },
          ]}
        />
      </ToolSection>
      <ToolSection title="Flächendruck">
        <Legend />
      </ToolSection>
      <ToolSection title="Anzeigeeigenschaften">
        {displayOptions.map((o) => (
          <label key={o.label} className="flex h-[19px] items-center gap-1.5 overflow-hidden pl-1 text-[11px] whitespace-nowrap text-black">
            <span className="relative flex">
              <input type="checkbox" defaultChecked={o.checked} className="peer size-3.5 appearance-none border border-[#3f66b4] bg-linear-to-br from-[#dcdcdc] to-white" />
              <svg width="14" height="14" viewBox="0 0 14 14" fill="none" className="pointer-events-none absolute inset-0 hidden peer-checked:block">
                <path d="M3.500 6.500l2.500 3 4.500-5" stroke="#0c7c0c" strokeWidth="2" />
              </svg>
            </span>
            {o.label}
          </label>
        ))}
      </ToolSection>
    </div>
    <DockTabs tabs={[{ label: 'Extras', icon: <ToolsIcon /> }, { label: 'Clipper', icon: <ClipperIcon /> }]} />
  </aside>
);

const StatusBar = () => (
  <footer className="flex h-[22px] shrink-0 items-stretch border-t border-[#d4d4d4] bg-[#f0f0f0] pt-0.5 pb-px text-[12px] text-black">
    <p className="flex-1 pl-[3px] leading-[19px]">Drücken Sie F1, um die Hilfe anzuzeigen.</p>
    <span className="w-2.5 border-l border-[#d0d0d0]" />
    <span className="w-[92px] border-l border-[#d0d0d0]" />
    <span className="w-[62px] border-l border-[#d0d0d0]" />
    <span className="w-[75px] border-l border-[#d0d0d0]" />
    <span className="w-[70px] border-l border-[#d0d0d0]" />
    <span className="w-[59px] border-l border-[#d0d0d0]" />
  </footer>
);

export default function App() {
  return (
    <div className="flex h-screen flex-col overflow-hidden bg-[#f0f0f0] font-[Roboto,'Open_Sans',sans-serif]">
      <TitleBar />
      <MenuBar />
      <Toolbar />
      <main className="flex min-h-0 flex-1 font-['DejaVu_Sans_Condensed','DejaVu_Sans',sans-serif]">
        <Navigator />
        <div className="mt-px mb-0.5 ml-[5px] flex min-w-0 flex-1 gap-px border-t-2 border-l-2 border-[#696969] bg-[#f0f0f0] pr-[3px] font-[Roboto,'Open_Sans',sans-serif]">
          <ModelWindow active>
            <FrontModel />
          </ModelWindow>
          <ModelWindow>
            <BackModel />
          </ModelWindow>
        </div>
        <ToolsPanel />
      </main>
      <StatusBar />
    </div>
  );
}
